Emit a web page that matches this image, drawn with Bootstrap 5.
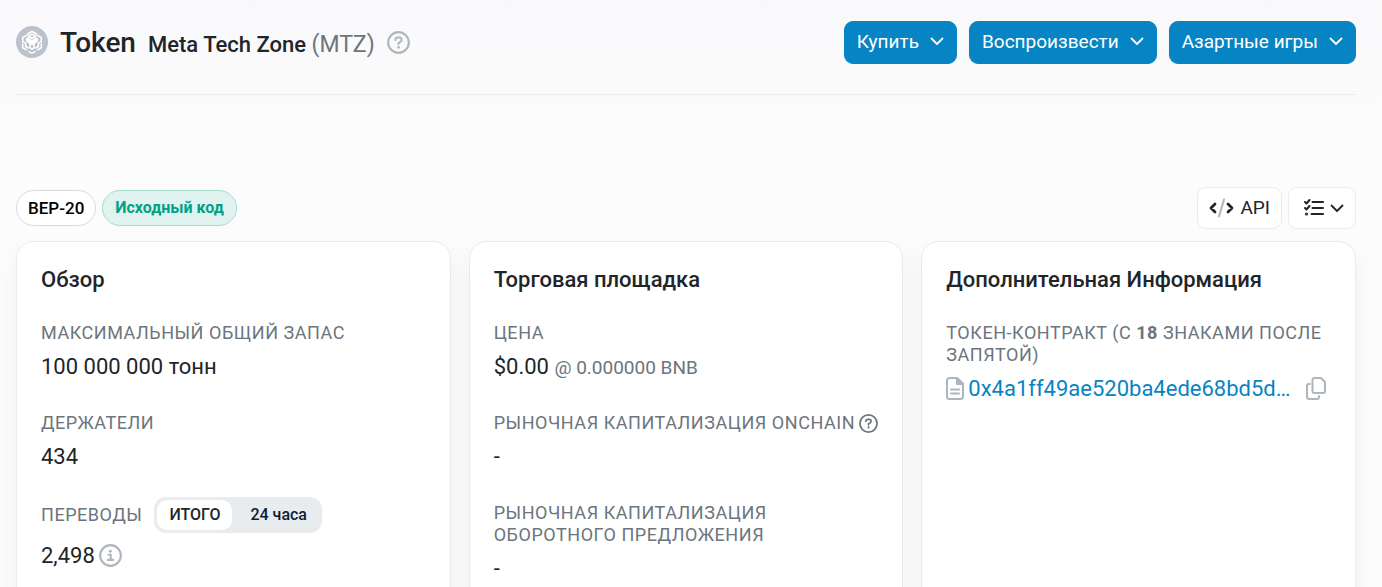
<!DOCTYPE html>
<html lang="ru">
<head>
<meta charset="utf-8">
<meta name="viewport" content="width=device-width, initial-scale=1">
<title>Meta Tech Zone (MTZ) Token</title>
<link href="https://cdn.jsdelivr.net/npm/bootstrap@5.3.0/dist/css/bootstrap.min.css" rel="stylesheet">
<style>
  body { font-family: Roboto, "Noto Sans", sans-serif; font-size: 22px; line-height: 32px; color: #212529; background: linear-gradient(#f9f9fb, #fcfcfc 180px) #fcfcfc; }
  .page { padding: 0 26px 0 16px; overflow-x: clip; }
  .page-head { padding: 20px 0 30px; border-bottom: 1px solid #ebecef; }
  .page-head h1 { font-size: 28px; line-height: 38px; font-weight: 500; }
  .page-head h1 span { font-size: 22px; }
  .page-head h1 .muted { font-weight: 400; font-size: 23px; }
  .muted { color: #6c757d; }
  .soft { color: #adb5bd; }
  .btn-menu { --bs-btn-color: #fff; --bs-btn-bg: #0784c3; --bs-btn-border-color: #0784c3; --bs-btn-hover-color: #fff; --bs-btn-hover-bg: #0670a6; font-size: 19px; line-height: 29px; padding: 5px 12px 7px; border-radius: 9px; gap: 11px; }
  .head-actions { gap: 12px; }
  .btn-tool { --bs-btn-color: #212529; --bs-btn-bg: #fff; --bs-btn-border-color: #e9ecef; --bs-btn-hover-bg: #f4f5f7; font-size: 19px; line-height: 28px; padding: 6px 11px; border-radius: 9px; gap: 6px; }
  .tag-row { margin-top: 92px; margin-bottom: 12px; }
  .tag-set { gap: 6px; }
  .tag { font-size: 17px; line-height: 24px; padding: 5px 11px; border: 1px solid #d5dae2; border-radius: 18px; background: #fff; color: #000; font-weight: 500; text-decoration: none; }
  .tag-code { font-size: 16px; padding: 5px 12px; background: #e0f3f0; border-color: #a6dccb; color: #00a186; font-weight: 700; }
  .panel-grid { display: grid; grid-template-columns: repeat(3, minmax(0, 1fr)); gap: 18px; }
  .panel { background: #fff; border: 1px solid #e9ecef; border-radius: 18px; padding: 22px 24px 24px; box-shadow: 0 10px 22px rgba(189, 197, 209, .2); }
  .panel h2 { font-size: 22px; line-height: 32px; font-weight: 500; margin-bottom: 26px; }
  .panel dl { margin: 0; }
  .panel dt { font-size: 18px; line-height: 22px; font-weight: 400; letter-spacing: .03em; color: #6c757d; text-transform: uppercase; margin-bottom: 7px; }
  .panel dd { margin-bottom: 29px; }
  .panel dd small { font-size: 19px; line-height: 1; }
  .panel dd.tight { margin-bottom: 24px; }
  .panel dd svg { margin-bottom: 2px; }
  .panel a { color: #0784c3; text-decoration: none; }
  .switcher { background: #e9ecef; border-radius: 12px; padding: 3px; gap: 6px; margin-left: 12px; }
  .switcher button { border: 0; background: none; font-size: 16px; line-height: 30px; font-weight: 500; letter-spacing: normal; color: #081d35; padding: 0 12px; border-radius: 10px; }
  .switcher button.active { background: #fff; color: #212529; }
  .icon-btn { border: 0; background: none; padding: 0; display: flex; }
  svg { flex: none; }
</style>
</head>
<body>
<svg class="d-none">
  <symbol id="chev" viewBox="0 0 14 14"><path d="M1.500 4.500 7 10l5.500-5.500" fill="none" stroke="currentColor" stroke-width="1.800" stroke-linecap="round" stroke-linejoin="round"/></symbol>
  <symbol id="help" viewBox="0 0 22 22"><circle cx="11" cy="11" r="9.900" fill="none" stroke="currentColor" stroke-width="2"/><path d="M8 8.600c0-1.500 1-2.300 2.300-2.300h1.300c1.400 0 2.400 1 2.400 2.200 0 1-.6 1.500-1.300 2L11 11.500v1.200" fill="none" stroke="currentColor" stroke-width="1.900" stroke-linecap="round"/><circle cx="11" cy="15.600" r="1.300" fill="currentColor"/></symbol>
</svg>
<main class="page">
  <header class="page-head d-flex align-items-center justify-content-between">
    <div class="d-flex align-items-center">
      <svg width="32" height="32" viewBox="0 0 32 32" class="me-2" aria-hidden="true">
        <circle cx="16" cy="16" r="16" fill="#bbc2cd"/>
        <g fill="none" stroke="#fff" stroke-width="1.600" stroke-linejoin="round">
          <path d="M11.500 8 16 5.500 20.500 8v1M11.500 8v1M12.300 10.200 16 8.200l3.700 2-3.700 2.100zM10.800 9.300 6.700 11.600v4l3 1.700M21.200 9.300l4.100 2.300v4l-3 1.700M6.700 17.500v4.300l4 2.300M25.300 17.500v4.300l-4 2.300M9.700 17.300v3.200l3 1.800M22.300 17.300v3.200l-3 1.800"/>
        </g>
        <path d="m10 12.300 2-1 4 2.600 4-2.600 2 1v3.200l-3.200 2v5L16 24l-2.800-1.500v-5l-3.200-2zM12.300 24.400 16 26.400l3.700-2V26L16 28l-3.700-2z" fill="#fff"/>
        <path d="m14.800 18.500 1.200.7 1.200-.7v3l-1.200.7-1.200-.7z" fill="#bbc2cd"/>
      </svg>
      <h1 class="d-flex align-items-baseline mb-0 ms-1 pt-1">Token <span class="ms-2 ps-1">Meta Tech Zone <span class="muted">(MTZ)</span></span></h1>
      <button class="icon-btn soft ms-2 ps-1" aria-label="Справка"><svg width="23" height="23"><use href="#help"/></svg></button>
    </div>
    <div class="d-flex head-actions">
      <button class="btn btn-menu d-flex align-items-center">Купить <svg width="14" height="14"><use href="#chev"/></svg></button>
      <button class="btn btn-menu d-flex align-items-center">Воспроизвести <svg width="14" height="14"><use href="#chev"/></svg></button>
      <button class="btn btn-menu d-flex align-items-center">Азартные игры <svg width="14" height="14"><use href="#chev"/></svg></button>
    </div>
  </header>

  <div class="tag-row d-flex align-items-center justify-content-between">
    <div class="d-flex tag-set">
      <span class="tag">BEP-20</span>
      <a class="tag tag-code" href="#code">Исходный код</a>
    </div>
    <div class="d-flex tag-set">
      <button class="btn btn-tool d-flex align-items-center">
        <svg width="25" height="20" viewBox="0 0 25 20" fill="none" stroke="currentColor" stroke-width="2.800" stroke-linecap="round" stroke-linejoin="round"><path d="M6 6 2 10l4 4M19 6l4 4-4 4"/><path d="m15 1.500-5 17" stroke="#adb5bd" stroke-width="2"/></svg>API</button>
      <button class="btn btn-tool d-flex align-items-center" aria-label="Меню">
        <svg width="20" height="20" viewBox="0 0 20 20" class="ms-1" fill="none" stroke="currentColor" stroke-width="2" stroke-linecap="round" stroke-linejoin="round"><path d="M8.500 4H19M8.500 10H19M7.500 16H19M1 4l1.500 1.500L5.500 2M1 10l1.500 1.500L5.500 8"/><circle cx="2.500" cy="16" r=".6"/></svg>
        <svg width="14" height="14"><use href="#chev"/></svg></button>
    </div>
  </div>

  <div class="panel-grid">
    <section class="panel">
      <h2>Обзор</h2>
      <dl>
        <dt>Максимальный общий запас</dt>
        <dd>100 000 000 тонн</dd>
        <dt>Держатели</dt>
        <dd class="tight">434</dd>
        <dt class="d-flex align-items-center">Переводы
          <span class="switcher d-flex"><button class="active">ИТОГО</button><button>24 часа</button></span></dt>
        <dd class="d-flex align-items-center mb-0">2,498
          <svg class="soft ms-1" width="23" height="23" viewBox="0 0 22 22"><circle cx="11" cy="11" r="9.900" fill="none" stroke="currentColor" stroke-width="2"/><circle cx="10.800" cy="6.900" r="1.400" fill="currentColor"/><path d="M9.200 10.300h2V15M8.500 15.200h5" fill="none" stroke="currentColor" stroke-width="2" stroke-linecap="round"/></svg></dd>
      </dl>
    </section>
    <section class="panel">
      <h2>Торговая площадка</h2>
      <dl>
        <dt>Цена</dt>
        <dd>$0.00 <small class="muted">@ 0.000000 BNB</small></dd>
        <dt class="d-flex align-items-center text-nowrap">Рыночная капитализация Onchain
          <button class="icon-btn muted ms-1" aria-label="Справка"><svg width="19" height="19"><use href="#help"/></svg></button></dt>
        <dd>-</dd>
        <dt>Рыночная капитализация оборотного предложения</dt>
        <dd class="mb-0">-</dd>
      </dl>
    </section>
    <section class="panel">
      <h2>Дополнительная Информация</h2>
      <dl>
        <dt>Токен-контракт (с <b>18</b> знаками после запятой)</dt>
        <dd class="d-flex align-items-center mb-0">
          <svg class="soft me-1" width="18" height="23" viewBox="0 0 18 23" fill="none" stroke="currentColor" stroke-width="2" stroke-linejoin="round"><path d="M3.500 1H11l6 6v12.500a2.500 2.500 0 0 1-2.500 2.500h-11A2.500 2.500 0 0 1 1 19.500v-16A2.500 2.500 0 0 1 3.500 1z"/><path d="M11 1v6h6z" fill="currentColor"/><path d="M5 12.500h8M5 16.500h8" stroke-linecap="round"/></svg>
          <a href="#contract">0x4a1ff49ae520ba4ede68bd5d…</a>
          <button class="icon-btn soft ms-3" aria-label="Копировать"><svg width="20" height="23" viewBox="0 0 20 23" fill="none" stroke="currentColor" stroke-width="2" stroke-linejoin="round" stroke-linecap="round"><path d="M8.500 1H15l4 4v9a2 2 0 0 1-2 2H8.500a2 2 0 0 1-2-2V3a2 2 0 0 1 2-2zM4 7H3a2 2 0 0 0-2 2v11a2 2 0 0 0 2 2h8a2 2 0 0 0 2-2v-1"/></svg></button></dd>
      </dl>
    </section>
  </div>
</main>
<script src="https://cdn.jsdelivr.net/npm/bootstrap@5.3.0/dist/js/bootstrap.bundle.min.js"></script>
</body>
</html>
